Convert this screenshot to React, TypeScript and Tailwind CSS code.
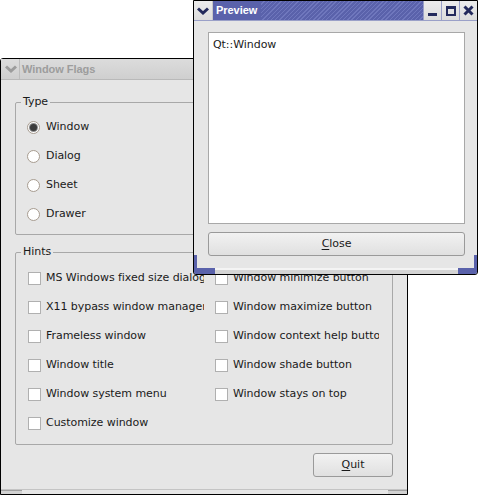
import React from "react";

const font = { fontFamily: '"DejaVu Sans", Verdana, sans-serif' };
const titleFont = { fontFamily: '"Liberation Sans", Arial, sans-serif' };

function Chevron({ color }: { color: string }) {
  return (
    <svg width="12" height="8" viewBox="0 0 12 8">
      <path d="M1 1.5 L6 6 L11 1.5" fill="none" stroke={color} strokeWidth="3" strokeLinejoin="miter" />
    </svg>
  );
}

function Radio({ label, checked }: { label: string; checked?: boolean }) {
  return (
    <div className="flex h-[29px] items-center">
      <div className="ml-[11px] flex h-[13px] w-[13px] items-center justify-center rounded-full border border-[#a79c90] bg-white">
        {checked && <div className="h-[7px] w-[7px] rounded-full bg-[#3c3c3c] shadow-[0_0_0_1px_#8a8a8a]" />}
      </div>
      <span className="ml-[6px] text-[#1a1a1a]">{label}</span>
    </div>
  );
}

function Check({ label, width }: { label: string; width: string }) {
  return (
    <div className="flex h-[29px] items-center">
      <div className="h-[13px] w-[13px] shrink-0 border border-[#b0b0b0] bg-white" />
      <span className={`ml-[5px] overflow-hidden whitespace-nowrap text-[#1a1a1a] ${width}`}>{label}</span>
    </div>
  );
}

function WindowFlags() {
  const left = [
    "MS Windows fixed size dialog",
    "X11 bypass window manager hint",
    "Frameless window",
    "Window title",
    "Window system menu",
    "Customize window",
  ];
  const right = [
    "Window minimize button",
    "Window maximize button",
    "Window context help button",
    "Window shade button",
    "Window stays on top",
  ];
  return (
    <div className="absolute left-0 top-[58px] flex h-[437px] w-[408px] flex-col rounded-tl-[3px] border border-black bg-[#e6e6e6]">
      <div className="flex h-[21px] shrink-0 items-center border-b border-[#b9b9b9] bg-gradient-to-b from-[#dcdcdc] to-[#cfcfcf]">
        <div className="flex h-full w-[19px] items-center justify-center border-r border-[#bdbdbd] pl-[1px]">
          <Chevron color="#9c9c9c" />
        </div>
        <span className="ml-[2px] text-[11px] font-bold text-[#9d9d9d]" style={titleFont}>
          Window Flags
        </span>
      </div>
      <div className="flex flex-1 flex-col px-[14px]">
        <fieldset className="mt-[15px] rounded-[2px] border border-[#a8a8a8] pb-[5px]">
          <legend className="ml-[5px] px-[2px] leading-[14px] text-[#1a1a1a]">Type</legend>
          <div className="pt-[4px]">
            <Radio label="Window" checked />
            <Radio label="Dialog" />
            <Radio label="Sheet" />
            <Radio label="Drawer" />
          </div>
        </fieldset>
        <fieldset className="mt-[10px] rounded-[2px] border border-[#a8a8a8] pb-[6px]">
          <legend className="ml-[5px] px-[2px] leading-[14px] text-[#1a1a1a]">Hints</legend>
          <div className="flex pl-[12px] pt-[5px]">
            <div className="flex w-[187px] flex-col">
              {left.map((l) => (
                <Check key={l} label={l} width="w-[158px]" />
              ))}
            </div>
            <div className="flex flex-col">
              {right.map((l) => (
                <Check key={l} label={l} width="w-[146px]" />
              ))}
            </div>
          </div>
        </fieldset>
        <div className="mt-[8px] flex justify-end">
          <button className="h-[24px] w-[80px] rounded-[3px] border border-[#9a9a9a] bg-gradient-to-b from-[#f2f2f2] to-[#e0e0e0] text-[#1a1a1a]">
            <span className="underline underline-offset-2">Q</span>uit
          </button>
        </div>
      </div>
      <div className="relative h-[5px] shrink-0 border-t border-[#c4c4c4] bg-[#e6e6e6]">
        <div className="absolute bottom-0 left-0 h-[4px] w-[21px] border-t border-[#a0a0a0] bg-[#d2d2d2]" />
        <div className="absolute bottom-0 right-0 h-[4px] w-[19px] border-t border-[#a0a0a0] bg-[#d2d2d2]" />
      </div>
    </div>
  );
}

function TitleButton({ children }: { children: React.ReactNode }) {
  return (
    <div className="flex h-full w-[18px] items-center justify-center border-l border-[#9aa0c8] bg-gradient-to-b from-[#ececec] to-[#dcdcdc]">
      {children}
    </div>
  );
}

function Preview() {
  return (
    <div className="absolute left-[193px] top-0 flex h-[275px] w-[285px] flex-col rounded-b-[3px] border border-black bg-[#e6e6e6]">
      <div className="flex h-[20px] shrink-0 items-stretch border-b border-[#9aa0c8]">
        <div className="flex w-[19px] items-center justify-center border-r border-[#c8c8c8] bg-gradient-to-b from-[#ececec] to-[#dcdcdc]">
          <Chevron color="#232a5c" />
        </div>
        <div className="flex items-center bg-[#5a62ab] pl-[3px] pr-[4px]">
          <span className="text-[11px] font-bold text-white" style={titleFont}>
            Preview
          </span>
        </div>
        <div className="flex-1 bg-[repeating-linear-gradient(135deg,#5a62ab_0px,#5a62ab_2px,#6f77bd_2px,#6f77bd_3px)]" />
        <TitleButton>
          <div className="mt-[7px] h-[3px] w-[9px] bg-[#232a5c]" />
        </TitleButton>
        <TitleButton>
          <div className="h-[10px] w-[10px] border-[2px] border-t-[3px] border-[#232a5c]" />
        </TitleButton>
        <TitleButton>
          <svg width="11" height="11" viewBox="0 0 11 11">
            <path d="M1.5 1.5 L9.5 9.5 M9.5 1.5 L1.5 9.5" stroke="#232a5c" strokeWidth="3" />
          </svg>
        </TitleButton>
      </div>
      <div className="flex flex-1 flex-col pl-[14px] pr-[12px]">
        <div className="mt-[11px] h-[192px] border border-[#a8a8a8] bg-white px-[4px] pt-[4px] text-[#1a1a1a]">
          Qt::Window
        </div>
        <button className="mt-[8px] h-[24px] w-full rounded-[3px] border border-[#9a9a9a] bg-gradient-to-b from-[#f2f2f2] to-[#e0e0e0] text-[#1a1a1a]">
          <span className="underline underline-offset-2">C</span>lose
        </button>
      </div>
      <div className="flex h-[6px] shrink-0 items-stretch">
        <div className="w-[21px] rounded-bl-[2px] bg-[#5a62ab]" />
        <div className="flex-1 border-t-[2px] border-[#f4f4f4] bg-[#d4d4d4]" />
        <div className="w-[19px] rounded-br-[2px] bg-[#5a62ab]" />
      </div>
      <div className="absolute bottom-[5px] left-0 h-[14px] w-[3px] bg-[#5a62ab]" />
      <div className="absolute bottom-[5px] right-0 h-[14px] w-[3px] bg-[#5a62ab]" />
    </div>
  );
}

export default function App() {
  return (
    <div
      className="relative h-[497px] w-[479px] overflow-hidden bg-white text-[11px] tracking-[-0.05px]"
      style={font}
    >
      <WindowFlags />
      <Preview />
    </div>
  );
}
